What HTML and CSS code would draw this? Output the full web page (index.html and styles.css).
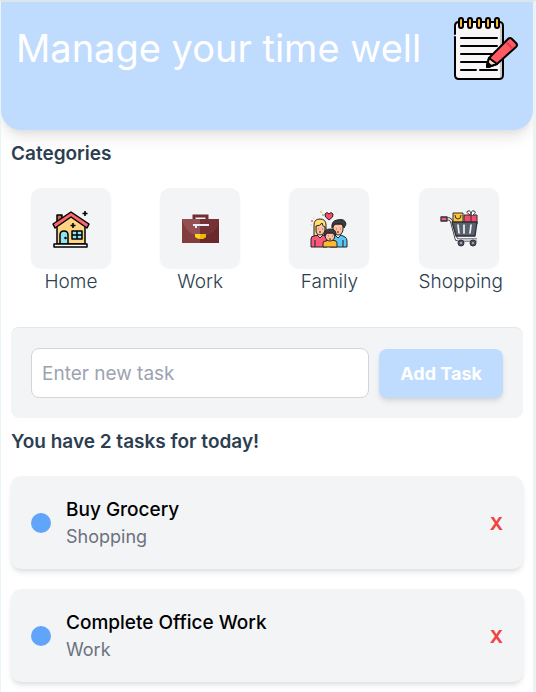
FILE: index.html
```html
<!DOCTYPE html>
<html lang="en">
<head>
<meta charset="utf-8">
<meta name="viewport" content="width=device-width, initial-scale=1">
<title>Manage your time well</title>
<link rel="stylesheet" href="styles.css">
</head>
<body>
<main class="app">
  <header class="hero">
    <h1 class="hero-title">Manage your time well</h1>
    <svg class="hero-icon" viewBox="0 0 64 64" aria-hidden="true" stroke="#000" stroke-width="2" stroke-linecap="round" stroke-linejoin="round">
      <path d="M1 17V9q0-4 4-4h40q4 0 4 4v49q0 4-4 4H5q-4 0-4-4V20" fill="#f9f6f7"/>
      <path d="M47 7v53" stroke="#a5a1a2" stroke-width="1"/>
      <g fill="#ffbe38">
        <rect x="5" y="1" width="4" height="10" rx="2"/><rect x="14" y="1" width="4" height="10" rx="2"/><rect x="23" y="1" width="4" height="10" rx="2"/><rect x="32" y="1" width="4" height="10" rx="2"/><rect x="41" y="1" width="4" height="10" rx="2"/>
      </g>
      <path d="M7 21h36M7 29h36M7 37h33M7 45h27M7 53h15M26 53h17" fill="none"/>
      <path d="M35 41 54 22q2-2 4 0l4 4q2 2 0 4L43 47l-9 3q-1 0-1-1z" fill="#ff5964"/>
      <path d="m35 41 8 6-9 3q-1 0-1-2z" fill="#f8d9c6"/>
      <path d="m34 46 3 3-4 1z" fill="#222"/>
      <path d="m53 26 5 5" stroke="#e63d4e"/>
    </svg>
  </header>

  <section class="section">
    <h2 class="section-title">Categories</h2>
    <ul class="categories">
      <li class="category">
        <span class="tile">
          <svg class="tile-icon" viewBox="0 0 40 40" aria-hidden="true" stroke="#000" stroke-width="1.5" stroke-linejoin="round">
            <path d="M6 14V7h5v6" fill="#b8754f"/>
            <path d="M6 17 20 7l14 10v19H6z" fill="#ffd581"/>
            <path d="m2 16 18-12 18 12-2 4L20 9 4 20z" fill="#f9666d"/>
            <path d="M9 36V27q0-4 4-4t4 4v9z" fill="#8de4f2"/>
            <path d="M21 23h10v8H21zM26 23v8M21 27h10" fill="#8de4f2"/>
            <path d="M3 36h33v3H3z" fill="#fff"/>
            <path d="M22 15v5M19.500 17.500h5M34 3v5M31.500 5.500h5" stroke-width="1.600"/>
            <circle cx="14.500" cy="30" r=".5"/>
          </svg>
        </span>
        <span class="category-name">Home</span>
      </li>
      <li class="category">
        <span class="tile">
          <svg class="tile-icon" viewBox="0 0 40 40" aria-hidden="true">
            <path d="M14 12V8h13v4" fill="none" stroke="#6e3033" stroke-width="3"/>
            <path d="M2 11h37v24H2z" fill="#843d3d"/>
            <path d="M20 11h19v24H20z" fill="#6a292b"/>
            <path d="M2 11h37q-2 16-19 17Q6 27 2 11z" fill="#945153"/>
            <path d="M20 11h19q-2 16-19 17z" fill="#753236"/>
            <path d="M13 16h16v2H17v2h-2v-2h-2z" fill="#e4effa"/>
            <path d="M15 26h11v3q-2 2-5.500 2T15 29z" fill="#ffd51c"/>
            <path d="M20 26h6v3q-2 2-6 2z" fill="#eeb700"/>
          </svg>
        </span>
        <span class="category-name">Work</span>
      </li>
      <li class="category">
        <span class="tile">
          <svg class="tile-icon" viewBox="0 0 40 40" aria-hidden="true" stroke="#242124" stroke-width="1" stroke-linejoin="round">
            <path d="M5 28V17q0-6 6-6t6 6v11z" fill="#ffe06d"/>
            <path d="M2 39V31q0-3 3-3l4-1h5l4 2v10z" fill="#f9597a"/>
            <path d="M21 39V29l5-2h6l4 2q2 1 2 4v6z" fill="#5ac8f7"/>
            <path d="m8 27 3 3 3-3M26 27l3 3 3-3" fill="#fff"/>
            <path d="M7 18q4 0 6-3 0 3 3 4v3q-1 5-5 5t-4-5zM24 18l2-2h7l1 2v4q-1 5-5 5t-5-5z" fill="#ffc0a0"/>
            <path d="M23 20q-1-7 5-8 8-2 9 4l-2 4-2-4h-7z" fill="#3b3b40"/>
            <path d="M14 39v-4q0-2 3-2l3-1h3l4 1q1 1 1 3v3z" fill="#ffb82f"/>
            <path d="M17 25h8l1 3q-1 5-5 5t-5-5z" fill="#ffc0a0"/>
            <path d="M15 27q0-6 6-6t6 5l-1 2-2-3h-6l-2 3z" fill="#3b3b40"/>
            <path d="M20 12q-5-3-4-6 2-3 4 0 2-3 4 0 1 3-4 6z" fill="#ff4968"/>
            <path d="M9 21h.5M13 21h.5M27 21h.5M31 21h.5M19 28h.5M23 28h.5M6 32v7M34 32v7M10 24h2M28 24h2M20 31h2"/>
            <g stroke="none"><circle cx="3" cy="13" r="1" fill="#f65379"/><circle cx="12" cy="4" r="1" fill="#ffc23c"/><circle cx="14" cy="7" r="1" fill="#63c8a4"/><circle cx="27" cy="4" r=".7" fill="#ffd37a"/><circle cx="2" cy="17" r=".7" fill="#83d9df"/><circle cx="5" cy="10" r=".7" fill="#ffc23c"/></g>
          </svg>
        </span>
        <span class="category-name">Family</span>
      </li>
      <li class="category">
        <span class="tile">
          <svg class="tile-icon" viewBox="0 0 40 40" aria-hidden="true" stroke="#302d34" stroke-width="1" stroke-linejoin="round">
            <path d="M14 5h10v10H14z" fill="#ffc436"/>
            <path d="M16 7q0 4 3 4t3-4" fill="none"/>
            <path d="M25 7h13v9H25z" fill="#ef4d68"/>
            <path d="M31 7q-5-3-2-4t3 4q0-5 3-4t-1 4M32 7v8" fill="#fff"/>
            <path d="M8 11q4-1 5 4l4 15q0 2 3 2h18" fill="none" stroke-width="3"/>
            <path d="M8 11q4-1 5 4l4 15q0 2 3 2h18" fill="none" stroke="#f6f6f6" stroke-width="1.500"/>
            <path d="M2 9h6v4H2z" fill="#f46074" stroke-width="1.300"/>
            <path d="M13 14h25l-2 14H17z" fill="#56616d" stroke-width="1.300"/>
            <path d="m19 17 1 8M25 17v8M32 17l-1 8" stroke="#f2f2f2" stroke-width="1.700" stroke-linecap="round"/>
            <circle cx="22" cy="35" r="3" fill="#4c555f"/><circle cx="34" cy="35" r="3" fill="#4c555f"/>
            <circle cx="22" cy="35" r=".8" fill="#fff" stroke="none"/><circle cx="34" cy="35" r=".8" fill="#fff" stroke="none"/>
          </svg>
        </span>
        <span class="category-name">Shopping</span>
      </li>
    </ul>
  </section>

  <form class="task-form">
    <input class="task-input" type="text" placeholder="Enter new task" aria-label="Enter new task">
    <button class="add-button" type="button">Add Task</button>
  </form>

  <section class="section">
    <h2 class="section-title">You have 2 tasks for today!</h2>
    <ul class="tasks">
      <li class="task">
        <span class="dot"></span>
        <div class="task-text">
          <h3 class="task-name">Buy Grocery</h3>
          <p class="task-category">Shopping</p>
        </div>
        <button class="delete-button" type="button" aria-label="Delete Buy Grocery">X</button>
      </li>
      <li class="task">
        <span class="dot"></span>
        <div class="task-text">
          <h3 class="task-name">Complete Office Work</h3>
          <p class="task-category">Work</p>
        </div>
        <button class="delete-button" type="button" aria-label="Delete Complete Office Work">X</button>
      </li>
    </ul>
  </section>
</main>
</body>
</html>
```
FILE: styles.css
```css
* {
  box-sizing: border-box;
  margin: 0;
  padding: 0;
}

body {
  min-height: 100vh;
  border: solid #eaf4f7;
  border-width: 2px 3px 0 1px;
  border-top-color: #d9e7ea;
  background: #fff;
  color: #2c3e50;
  font-family: Inter, "Liberation Sans", sans-serif;
  font-size: 19px;
  line-height: 27px;
}

ul {
  list-style: none;
}

button,
input {
  font: inherit;
}

.hero {
  display: flex;
  justify-content: space-between;
  align-items: flex-start;
  min-height: 128px;
  padding: 15px;
  border-radius: 0 0 20px 20px;
  background: #bfdbfe;
  box-shadow: 0 10px 15px -3px rgba(0, 0, 0, 0.1), 0 4px 6px -2px rgba(0, 0, 0, 0.05);
}

.hero-title {
  color: #fff;
  font-size: 38px;
  font-weight: 400;
  line-height: 62px;
}

.hero-icon {
  flex: none;
  width: 64px;
  height: 64px;
}

.section {
  padding: 10px;
}

.section-title {
  font-size: 19px;
  font-weight: 600;
}

.categories {
  display: flex;
  justify-content: space-between;
  padding: 21px 20px;
}

.category {
  text-align: center;
}

.tile {
  display: flex;
  align-items: center;
  justify-content: center;
  width: 80px;
  height: 80px;
  border-radius: 10px;
  background: #f3f4f6;
  box-shadow: 0 1px 2px rgba(0, 0, 0, 0.05);
}

.tile-icon {
  width: 40px;
  height: 40px;
}

.category-name {
  font-weight: 300;
}

.task-form {
  display: flex;
  align-items: center;
  gap: 10px;
  margin: 1px 10px 0;
  padding: 20px;
  border-top: 1px solid #e5e7eb;
  border-radius: 8px;
  background: #f3f4f6;
}

.task-input {
  flex: 1;
  min-width: 0;
  height: 50px;
  padding: 0 10px;
  border: 1px solid #d1d5db;
  border-radius: 8px;
  background: #fff;
  color: #2c3e50;
}

.task-input::placeholder {
  color: #9ca3af;
}

.add-button {
  height: 49px;
  padding: 0 21px;
  border: 0;
  border-radius: 8px;
  background: #bfdbfe;
  color: #fff;
  font-size: 18px;
  font-weight: 700;
  box-shadow: 0 4px 6px -1px rgba(0, 0, 0, 0.1), 0 2px 4px -1px rgba(0, 0, 0, 0.06);
}

.tasks {
  display: grid;
  gap: 20px;
  padding-top: 21px;
}

.task {
  display: flex;
  align-items: center;
  gap: 15px;
  padding: 20px 20px 19px;
  border-radius: 10px;
  background: #f3f4f6;
  box-shadow: 0 4px 6px -1px rgba(0, 0, 0, 0.1), 0 2px 4px -1px rgba(0, 0, 0, 0.06);
}

.dot {
  flex: none;
  width: 20px;
  height: 20px;
  border-radius: 50%;
  background: #60a5fa;
}

.task-text {
  flex: 1;
}

.task-name {
  color: #000;
  font-size: 19px;
  font-weight: 500;
}

.task-category {
  color: #6b7280;
  font-size: 18px;
  font-weight: 400;
}

.delete-button {
  border: 0;
  background: none;
  color: #ef4444;
  font-size: 18px;
  font-weight: 700;
}
```
